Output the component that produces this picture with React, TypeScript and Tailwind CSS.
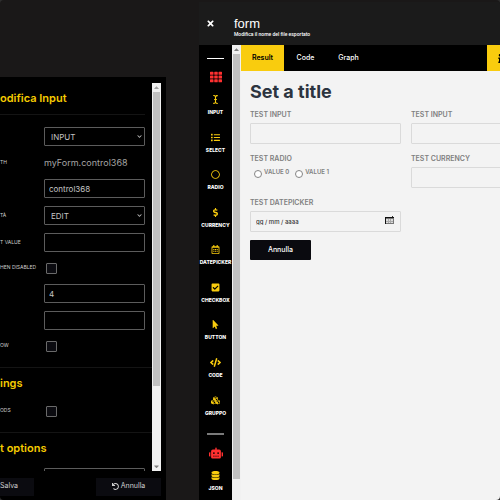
import React, { useId } from "react";
import type { IconType } from "react-icons";
import {
  FaTimes,
  FaTh,
  FaICursor,
  FaList,
  FaRegCircle,
  FaDollarSign,
  FaRegCalendarAlt,
  FaCheckSquare,
  FaMousePointer,
  FaCode,
  FaCubes,
  FaRobot,
  FaDatabase,
  FaUndo,
  FaInfo,
  FaChevronDown,
  FaCaretUp,
  FaCaretDown,
} from "react-icons/fa";

const tools: { label: string; Icon: IconType }[] = [
  { label: "INPUT", Icon: FaICursor },
  { label: "SELECT", Icon: FaList },
  { label: "RADIO", Icon: FaRegCircle },
  { label: "CURRENCY", Icon: FaDollarSign },
  { label: "DATEPICKER", Icon: FaRegCalendarAlt },
  { label: "CHECKBOX", Icon: FaCheckSquare },
  { label: "BUTTON", Icon: FaMousePointer },
  { label: "CODE", Icon: FaCode },
  { label: "GRUPPO", Icon: FaCubes },
];

const darkBox =
  "block h-[19px] w-full appearance-none rounded-[1px] border border-[#5c5c5c] bg-black px-1 text-[8px] text-[#c4c4c4] outline-none";
const lightBox =
  "block h-[21px] w-full rounded-[1px] border border-[#dadada] bg-[#f3f3f3] px-1 text-[6px] font-medium text-[#333] outline-none";

function RowLabel({ id, children }: { id: string; children: React.ReactNode }) {
  return (
    <label htmlFor={id} className="w-11 shrink-0 whitespace-nowrap text-[5px] text-[#d0d0d0]">
      {children}
    </label>
  );
}

function InputRow({ label, name, value = "" }: { label: string; name: string; value?: string }) {
  const id = useId();
  return (
    <div className="flex h-[27px] items-center">
      <RowLabel id={id}>{label}</RowLabel>
      <input id={id} aria-label={name} defaultValue={value} className={darkBox} />
    </div>
  );
}

function SelectRow({ label, name, value }: { label: string; name: string; value: string }) {
  const id = useId();
  return (
    <div className="flex h-[27px] items-center">
      <RowLabel id={id}>{label}</RowLabel>
      <div className="relative flex-1">
        <select id={id} aria-label={name} defaultValue={value} className={darkBox + " pl-1.5"}>
          <option>{value}</option>
        </select>
        <FaChevronDown className="pointer-events-none absolute right-[3px] top-[7px] h-[5px] w-[5px] text-[#c4c4c4]" />
      </div>
    </div>
  );
}

function CheckRow({ label, name }: { label: string; name: string }) {
  const id = useId();
  return (
    <div className="flex h-6 items-center">
      <RowLabel id={id}>{label}</RowLabel>
      <input
        id={id}
        aria-label={name}
        type="checkbox"
        className="ml-0.5 block h-[11px] w-[11px] appearance-none rounded-[1px] border border-[#6a6a6a] bg-[#0b0b10]"
      />
    </div>
  );
}

function SectionTitle({ children }: { children: React.ReactNode }) {
  return (
    <h2 className="flex h-[31px] items-center whitespace-nowrap text-[11px] font-semibold text-[#f5cb00]">
      {children}
    </h2>
  );
}

function EditPanel() {
  return (
    <aside className="flex min-h-0 w-[166px] flex-1 flex-col bg-black pt-1.5">
      <div className="flex min-h-0 flex-1 pr-[5px]">
        <div className="min-w-0 flex-1 overflow-hidden">
          <SectionTitle>odifica Input</SectionTitle>
          <div className="mr-[7px] border-t border-[#141414] pt-2">
            <SelectRow label="" name="Tipo" value="INPUT" />
            <div className="flex h-[25px] items-center">
              <span className="w-11 shrink-0 text-[5px] text-[#d0d0d0]">TH</span>
              <span className="text-[9px] text-[#a5a5a5]">myForm.control368</span>
            </div>
            <InputRow label="" name="Nome" value="control368" />
            <SelectRow label="TÀ" name="Modalità" value="EDIT" />
            <InputRow label="T VALUE" name="Valore" />
            <CheckRow label="HEN DISABLED" name="Disabilitato" />
            <InputRow label="" name="Colonne" value="4" />
            <InputRow label="" name="Classe" />
            <CheckRow label="OW" name="Riga" />
          </div>
          <div className="mt-[9px] border-t border-[#141414]">
            <SectionTitle>ings</SectionTitle>
            <CheckRow label="ODS" name="Metodi" />
          </div>
          <div className="mt-[9px] border-t border-[#141414]">
            <SectionTitle>t options</SectionTitle>
            <div className="mr-[7px]">
              <InputRow label="" name="Opzione" />
            </div>
          </div>
        </div>
        <div className="flex w-[9px] flex-col items-center bg-[#f1f1f1]">
          <FaCaretUp className="h-[9px] w-[5px] text-[#a0a0a0]" />
          <div className="h-[294px] w-[7px] bg-[#c1c1c1]" />
          <FaCaretDown className="mt-auto h-[9px] w-[5px] text-[#808080]" />
        </div>
      </div>
      <div className="flex h-[29px] shrink-0 items-center justify-between pr-[5px] pt-0.5 text-[7px] text-[#d0d0d0]">
        <button className="h-[18px] w-[34px] bg-[#0b0b10] text-left">Salva</button>
        <button className="flex h-[18px] w-[65px] items-center justify-center gap-0.5 bg-[#0b0b10]">
          <FaUndo className="h-[7px] w-[7px]" />
          Annulla
        </button>
      </div>
    </aside>
  );
}

function Tool({ label, Icon }: { label: string; Icon: IconType }) {
  return (
    <button className="flex flex-1 flex-col items-center whitespace-nowrap text-[5px] font-extrabold text-white">
      <Icon className="h-[9px] w-[11px] shrink-0 text-[#f9cc0e]" />
      <span className="mt-1 leading-[8px]">{label}</span>
    </button>
  );
}

function Toolbar() {
  return (
    <nav className="flex w-[33px] shrink-0 flex-col items-center bg-black">
      <div className="mt-[13px] h-px w-[17px] shrink-0 bg-white" />
      <button aria-label="Griglia" className="mt-3 text-[#ff3030]">
        <FaTh className="h-[12px] w-[12px]" />
      </button>
      <div className="mt-3 flex h-[338px] w-full shrink-0 flex-col">
        {tools.map((t) => (
          <Tool key={t.label} {...t} />
        ))}
      </div>
      <div className="h-[2px] w-[17px] shrink-0 bg-[#7a7a7a]" />
      <button aria-label="Robot" className="mt-3 text-[#ff3030]">
        <FaRobot className="h-[12px] w-[14px]" />
      </button>
      <div className="mt-3 flex w-full shrink-0">
        <Tool label="JSON" Icon={FaDatabase} />
      </div>
    </nav>
  );
}

function Field({ label }: { label: string }) {
  const id = useId();
  return (
    <div className="flex flex-col gap-1">
      <label htmlFor={id} className="text-[7px] font-semibold leading-[9px] text-[#808080]">
        {label}
      </label>
      <input id={id} className={lightBox} />
    </div>
  );
}

function Preview() {
  return (
    <form className="flex-1 bg-[#f3f3f3] pl-[9px] pt-2">
      <h1 className="text-[18px] font-bold leading-[26px] text-[#2c343f]">Set a title</h1>
      <div className="mt-[5px] grid grid-cols-[151px_151px] gap-x-2.5 gap-y-[10px]">
        <Field label="TEST INPUT" />
        <Field label="TEST INPUT" />
        <fieldset className="flex h-[34px] flex-col">
          <legend className="text-[7px] font-semibold leading-[9px] text-[#808080]">TEST RADIO</legend>
          <div className="flex gap-1.5 pl-1 pt-1 text-[6px] font-semibold leading-[9px] text-[#808080]">
            {["VALUE 0", "VALUE 1"].map((v) => (
              <label key={v} className="flex gap-0.5">
                <input
                  type="radio"
                  name="radio"
                  className="mt-[3px] h-2 w-2 appearance-none rounded-full border border-[#858585] bg-white"
                />
                {v}
              </label>
            ))}
          </div>
        </fieldset>
        <Field label="TEST CURRENCY" />
        <div className="flex flex-col gap-1">
          <label htmlFor="date" className="text-[7px] font-semibold leading-[9px] text-[#808080]">
            TEST DATEPICKER
          </label>
          <div className="relative">
            <input id="date" defaultValue="gg / mm / aaaa" className={lightBox + " pl-[5px]"} />
            <svg
              viewBox="0 0 9 8"
              className="pointer-events-none absolute right-[7px] top-[5px] h-[8px] w-[9px]"
              shapeRendering="crispEdges"
            >
              <path d="M0 1h9v7H0z" fill="#777" />
              <path d="M0 1h9v1H0zM0 1h1v7H0z" fill="#111" />
              <path d="M1 3h7v4H1z" fill="#dcdcdc" />
              <path d="M3 3h1v4H3zM5 3h1v4H5zM1 5h7v1H1z" fill="#aaa" />
              <path d="M7 0h1v1H7z" fill="#333" />
            </svg>
          </div>
        </div>
      </div>
      <button type="button" className="mt-2 h-5 w-[61px] rounded-[1px] bg-[#0a0a0f] text-[7px] font-medium text-white">
        Annulla
      </button>
    </form>
  );
}

function Builder() {
  return (
    <main className="mt-0.5 flex min-w-0 flex-1 flex-col overflow-hidden">
      <header className="flex h-[43px] shrink-0 bg-[#1b1b1b] pl-[7px] text-white">
        <button aria-label="Chiudi" className="w-7">
          <FaTimes className="h-[9px] w-[9px]" />
        </button>
        <div className="flex flex-col pt-3.5 font-['Liberation_Sans',sans-serif]">
          <span className="text-[13px] leading-[15px]">form</span>
          <span className="whitespace-nowrap font-['Roboto',sans-serif] text-[5px] font-medium leading-[6px]">
            Modifica il nome del file esportato
          </span>
        </div>
      </header>
      <div className="flex min-h-0 flex-1">
        <Toolbar />
        <div className="flex w-[9px] shrink-0 flex-col items-center bg-[#f1f1f1]">
          <FaCaretUp className="h-[9px] w-[5px] shrink-0 text-[#808080]" />
          <div className="h-[425px] w-[7px] shrink-0 bg-[#c1c1c1]" />
        </div>
        <div className="flex min-w-0 flex-1 flex-col overflow-hidden">
          <div className="flex h-[26px] shrink-0 bg-black text-[7px] font-medium text-white">
            <button className="w-[43px] bg-[#f9cc0e] font-semibold text-black">Result</button>
            <button className="w-[43px]">Code</button>
            <button className="w-[43px]">Graph</button>
            <button
              aria-label="Info"
              className="ml-auto flex w-[13px] items-center overflow-hidden bg-[#f9cc0e] pl-[11px] text-black"
            >
              <FaInfo className="h-[9px] w-1 shrink-0" />
            </button>
          </div>
          <Preview />
        </div>
      </div>
    </main>
  );
}

export default function App() {
  return (
    <div className="h-screen bg-[#2e2e2e]">
      <div className="flex h-full overflow-hidden rounded-[4px] bg-[#1a1818] font-['Inter',sans-serif]">
        <div className="flex w-[199px] shrink-0 flex-col pt-[77px]">
          <EditPanel />
        </div>
        <Builder />
      </div>
    </div>
  );
}
